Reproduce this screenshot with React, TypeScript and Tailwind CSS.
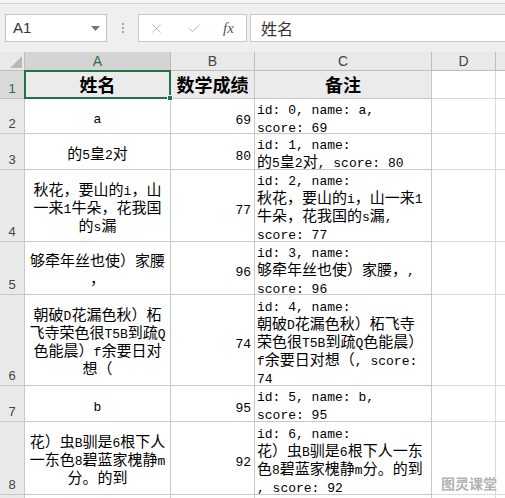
import { Check, X } from "lucide-react";

type Row = {
  n: number;
  h: string;
  a: string[];
  b: string;
  c: string[];
};

const rows: Row[] = [
  { n: 2, h: "h-[35px]", a: ["a"], b: "69", c: ["id: 0, name: a,", "score: 69"] },
  { n: 3, h: "h-[36px]", a: ["的5皇2对"], b: "80", c: ["id: 1, name:", "的5皇2对, score: 80"] },
  {
    n: 4,
    h: "h-[72px]",
    a: ["秋花，要山的i，山", "一来1牛朵，花我国", "的s漏"],
    b: "77",
    c: ["id: 2, name:", "秋花，要山的i，山一来1", "牛朵，花我国的s漏,", "score: 77"],
  },
  {
    n: 5,
    h: "h-[53px]",
    a: ["够牵年丝也使）家腰", "，"],
    b: "96",
    c: ["id: 3, name:", "够牵年丝也使）家腰，,", "score: 96"],
  },
  {
    n: 6,
    h: "h-[91px]",
    a: ["朝破D花漏色秋）柘", "飞寺荣色很T5B到疏Q", "色能晨）f余要日对", "想（"],
    b: "74",
    c: ["id: 4, name:", "朝破D花漏色秋）柘飞寺", "荣色很T5B到疏Q色能晨）", "f余要日对想（, score:", "74"],
  },
  { n: 7, h: "h-[36px]", a: ["b"], b: "95", c: ["id: 5, name: b,", "score: 95"] },
  {
    n: 8,
    h: "h-[73px]",
    a: ["花）虫B驯是6根下人", "一东色8碧蓝家槐静m", "分。的到"],
    b: "92",
    c: ["id: 6, name:", "花）虫B驯是6根下人一东", "色8碧蓝家槐静m分。的到", ", score: 92"],
  },
];

// one wrapped line of a cell: ascii runs in a mono face, the rest in the CJK face
function Line({ text }: { text: string }) {
  const parts = text.split(/([\x20-\x7e]+)/).filter(Boolean);
  return (
    <div className="h-[18px] leading-[18px] whitespace-pre">
      {parts.map((p, i) =>
        /^[\x20-\x7e]+$/.test(p) ? (
          <span key={i} className="font-['Liberation_Mono',monospace] text-[13px] leading-[18px]">
            {p}
          </span>
        ) : (
          <span key={i} className="font-['Noto_Sans_CJK_SC',sans-serif] text-[15px] leading-[18px]">
            {p}
          </span>
        )
      )}
    </div>
  );
}

const RowHead = ({ n, active }: { n?: number; active?: boolean }) => (
  <div
    className={
      active
        ? "w-[25px] shrink-0 h-full flex items-end justify-center pb-[3px] bg-[#d9d9d9] border-r border-b border-[#bdbdbd] text-[#217346] text-[13px] leading-none font-['Liberation_Sans',sans-serif]"
        : "w-[25px] shrink-0 h-full flex items-end justify-center pb-[3px] bg-[#e9e9e9] border-r border-b border-[#c8c8c8] text-[#444] text-[13px] leading-none font-['Liberation_Sans',sans-serif]"
    }
  >
    {n}
  </div>
);

export default function App() {
  return (
    <div className="w-[505px] h-[498px] overflow-hidden bg-white relative flex flex-col text-black">
      {/* formula bar */}
      <div className="h-[52px] shrink-0 bg-[#f5f5f5] pt-[3px]">
        <div className="h-full border-t border-[#d4d4d4] bg-[#efefef] flex items-start pt-[10px] pl-[5px]">
          <div className="w-[102px] h-[28px] shrink-0 bg-white border border-[#c6c6c6] flex items-center justify-between pl-[7px] pr-[6px]">
            <span className="text-[15px] text-[#333] font-['Liberation_Sans',sans-serif]">A1</span>
            <svg width="9" height="5" viewBox="0 0 9 5">
              <polygon points="0,0 9,0 4.5,5" fill="#767676" />
            </svg>
          </div>
          <div className="w-[31px] h-[28px] shrink-0 flex flex-col items-center justify-center gap-[2px]">
            <div className="w-[2px] h-[2px] bg-[#a5a5a5]" />
            <div className="w-[2px] h-[2px] bg-[#a5a5a5]" />
            <div className="w-[2px] h-[2px] bg-[#a5a5a5]" />
          </div>
          <div className="w-[109px] h-[28px] shrink-0 bg-white border border-[#c6c6c6] flex items-center pl-[10px]">
            <X size={15} strokeWidth={1.3} color="#a8a8a8" />
            <Check size={15} strokeWidth={1.6} color="#b4b4b4" className="ml-[23px]" />
            <span className="ml-[21px] italic text-[15px] text-[#555] font-['Liberation_Serif',serif]">fx</span>
          </div>
          <div className="flex-1 h-[28px] ml-[3px] bg-white border border-r-0 border-[#c6c6c6] flex items-center pl-[10px]">
            <span className="text-[16px] text-[#333] font-['Noto_Sans_CJK_SC',sans-serif]">姓名</span>
          </div>
        </div>
      </div>

      {/* column letters */}
      <div className="h-[19px] shrink-0 flex bg-[#e9e9e9] text-[14px] leading-none font-['Liberation_Sans',sans-serif] text-[#444]">
        <div className="w-[25px] shrink-0 border-r border-b border-[#bdbdbd] flex items-end justify-end p-[2px]">
          <svg width="12" height="12" viewBox="0 0 12 12">
            <polygon points="12,0 12,12 0,12" fill="#b8b8b8" />
          </svg>
        </div>
        <div className="w-[146px] shrink-0 bg-[#d4d4d4] border-r border-b border-[#bdbdbd] flex items-center justify-center text-[#217346]">
          A
        </div>
        <div className="w-[84px] shrink-0 border-r border-b border-[#bdbdbd] flex items-center justify-center">B</div>
        <div className="w-[177px] shrink-0 border-r border-b border-[#bdbdbd] flex items-center justify-center">C</div>
        <div className="w-[64px] shrink-0 border-r border-b border-[#bdbdbd] flex items-center justify-center">D</div>
        <div className="flex-1 border-b border-[#bdbdbd]" />
      </div>

      {/* row 1: headings */}
      <div className="h-[28px] shrink-0 flex">
        <RowHead n={1} active />
        <div className="w-[146px] shrink-0 relative bg-[#ebebeb] border-r border-b border-[#c8c8c8] flex items-center justify-center text-[18px] font-bold font-['Noto_Sans_CJK_SC',sans-serif]">
          姓名
          <div className="absolute left-[-1px] top-[-1px] w-[147px] h-[29px] border-2 border-[#217346]">
            <div className="absolute right-[-4px] bottom-[-4px] w-[6px] h-[6px] bg-[#217346] border border-white" />
          </div>
        </div>
        <div className="w-[84px] shrink-0 bg-[#ebebeb] border-r border-b border-[#c8c8c8] flex items-center justify-center text-[18px] font-bold font-['Noto_Sans_CJK_SC',sans-serif]">
          数学成绩
        </div>
        <div className="w-[177px] shrink-0 bg-[#ebebeb] border-r border-b border-[#c8c8c8] flex items-center justify-center text-[18px] font-bold font-['Noto_Sans_CJK_SC',sans-serif]">
          备注
        </div>
        <div className="w-[64px] shrink-0 border-r border-b border-[#dadada]" />
        <div className="flex-1 border-b border-[#dadada]" />
      </div>

      {rows.map((r) => (
        <div key={r.n} className={`${r.h} shrink-0 flex`}>
          <RowHead n={r.n} />
          <div className="w-[146px] shrink-0 border-r border-b border-[#c8c8c8] flex flex-col items-center justify-center pt-[2px]">
            {r.a.map((t, i) => (
              <Line key={i} text={t} />
            ))}
          </div>
          <div className="w-[84px] shrink-0 border-r border-b border-[#c8c8c8] flex items-center justify-end pr-[3px] pt-[4px]">
            <Line text={r.b} />
          </div>
          <div className="w-[177px] shrink-0 border-r border-b border-[#c8c8c8] flex flex-col justify-center pl-[2px] pt-[1px]">
            {r.c.map((t, i) => (
              <Line key={i} text={t} />
            ))}
          </div>
          <div className="w-[64px] shrink-0 border-r border-b border-[#dadada]" />
          <div className="flex-1 border-b border-[#dadada]" />
        </div>
      ))}

      {/* next row, only its top edge shows */}
      <div className="h-[20px] shrink-0 flex">
        <RowHead />
        <div className="w-[146px] shrink-0 border-r border-[#c8c8c8]" />
        <div className="w-[84px] shrink-0 border-r border-[#c8c8c8]" />
        <div className="w-[177px] shrink-0 border-r border-[#c8c8c8]" />
        <div className="w-[64px] shrink-0 border-r border-[#dadada]" />
      </div>

      <div className="absolute left-[441px] top-[473px] text-[14px] font-bold text-[#b2b2b2] font-['Noto_Sans_CJK_SC',sans-serif] [text-shadow:0_0_2px_#fff]">
        图灵课堂
      </div>
    </div>
  );
}
